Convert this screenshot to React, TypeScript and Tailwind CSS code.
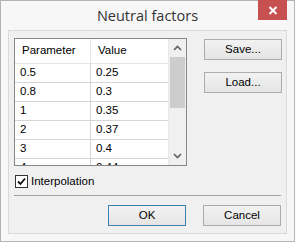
import React from "react";

const rows: [string, string][] = [
  ["0.5", "0.25"],
  ["0.8", "0.3"],
  ["1", "0.35"],
  ["2", "0.37"],
  ["3", "0.4"],
  ["4", "0.44"],
];

function Btn({ label, def }: { label: string; def?: boolean }) {
  return (
    <div
      className={
        "w-[78px] h-[21px] flex items-center justify-center border bg-gradient-to-b from-[#f2f2f2] to-[#e5e5e5] text-[11.5px] text-black " +
        (def ? "border-[#3c7fb1]" : "border-[#acacac]")
      }
    >
      {label}
    </div>
  );
}

export default function App() {
  return (
    <div
      className="w-[295px] h-[242px] bg-[#f7f7f7] border border-[#b4b4b4] flex flex-col px-[7px] pb-[7px]"
      style={{ fontFamily: "Tahoma, 'Liberation Sans', Arial, sans-serif" }}
    >
      <div className="h-[29px] relative flex items-center justify-center">
        <span
          className="text-[14.5px] text-[#333] mt-[1px]"
          style={{ fontFamily: "'Open Sans', 'Noto Sans', sans-serif" }}
        >
          Neutral factors
        </span>
        <div className="absolute right-[0px] top-[-1px] w-[29px] h-[20px] bg-[#c75050] flex items-center justify-center">
          <svg width="10" height="9" viewBox="0 0 10 9">
            <path d="M1.5 1 L8.5 8 M8.5 1 L1.5 8" stroke="white" strokeWidth="2" />
          </svg>
        </div>
      </div>
      <div className="flex-1 border border-[#dadada] bg-[#f0f0f0] flex flex-col pl-[5px] pt-[7px]">
        <div className="flex">
          <div className="w-[173px] h-[128px] border border-[#828790] bg-white flex overflow-hidden">
            <div className="w-[153px] flex flex-col text-[11.5px] text-black">
              <div className="h-[25px] flex border-b border-[#e5e5e5] shrink-0">
                <div className="w-[76px] border-r border-[#e5e5e5] pl-[7px] flex items-center">Parameter</div>
                <div className="flex-1 pl-[7px] flex items-center">Value</div>
              </div>
              {rows.map(([a, b], i) => (
                <div key={i} className="h-[19px] flex border-b border-[#d5d5d5] shrink-0">
                  <div className="w-[76px] border-r border-[#d5d5d5] pl-[5px] flex items-center">{a}</div>
                  <div className="flex-1 pl-[5px] flex items-center">{b}</div>
                </div>
              ))}
            </div>
            <div className="flex-1 bg-[#f0f0f0] border-l border-[#e8e8e8] flex flex-col items-center">
              <div className="h-[18px] w-full flex items-center justify-center">
                <svg width="9" height="6" viewBox="0 0 9 6">
                  <path d="M1 5 L4.5 1.5 L8 5" stroke="#606060" strokeWidth="1.6" fill="none" />
                </svg>
              </div>
              <div className="w-[15px] h-[51px] bg-[#cdcdcd]" />
              <div className="flex-1" />
              <div className="h-[18px] w-full flex items-center justify-center">
                <svg width="9" height="6" viewBox="0 0 9 6">
                  <path d="M1 1 L4.5 4.5 L8 1" stroke="#606060" strokeWidth="1.6" fill="none" />
                </svg>
              </div>
            </div>
          </div>
          <div className="ml-[17px] mt-[1px] flex flex-col gap-[12px]">
            <Btn label="Save..." />
            <Btn label="Load..." />
          </div>
        </div>
        <div className="flex items-center mt-[9px] ml-[1px] h-[13px]">
          <div className="w-[13px] h-[13px] border border-[#333] bg-white flex items-center justify-center">
            <svg width="9" height="9" viewBox="0 0 9 9">
              <path d="M1 4.5 L3.5 7 L8 1.5" stroke="#111" strokeWidth="1.8" fill="none" />
            </svg>
          </div>
          <span className="ml-[3px] text-[11.5px] text-black">Interpolation</span>
        </div>
        <div className="mt-[7px] w-[267px] h-[1px] bg-[#a0a0a0]" />
        <div className="flex mt-[9px] ml-[94px] gap-[17px]">
          <Btn label="OK" def />
          <Btn label="Cancel" />
        </div>
      </div>
    </div>
  );
}
